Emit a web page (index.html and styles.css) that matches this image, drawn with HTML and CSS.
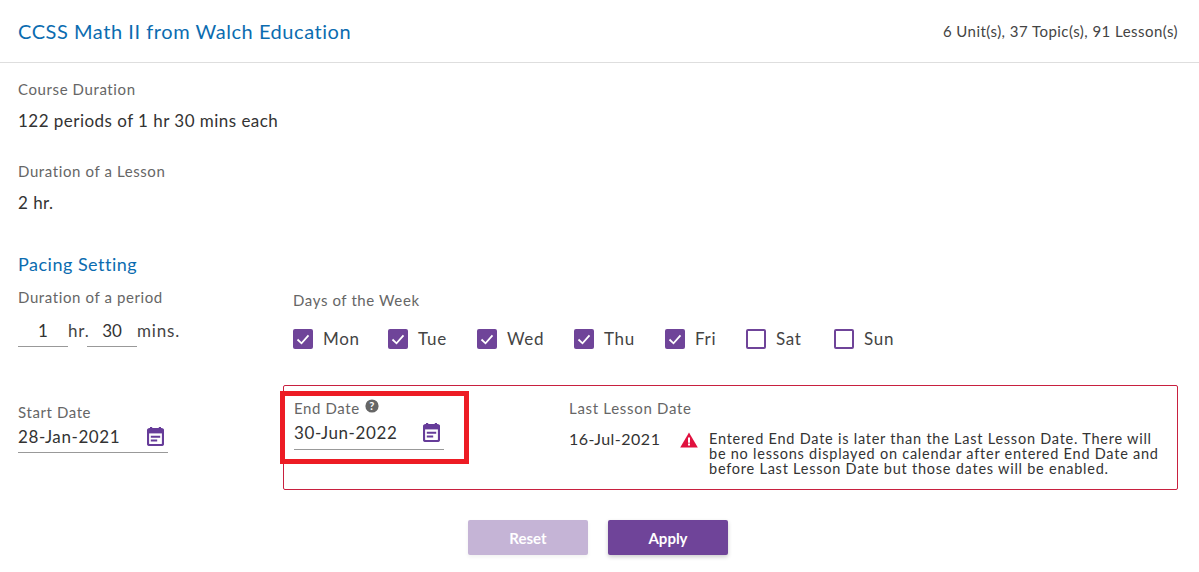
FILE: index.html
```html
<!DOCTYPE html>
<html lang="en">
<head>
<meta charset="utf-8">
<title>Pacing</title>
<link rel="stylesheet" href="styles.css">
</head>
<body>
<svg class="defs" width="0" height="0" aria-hidden="true">
  <symbol id="cal" viewBox="0 0 17 19">
    <path d="M3 0h2.2v2.5H3zM11.8 0H14v2.5h-2.2z" fill="#663c99"/>
    <rect x="1" y="2" width="15" height="16" rx="1.5" fill="none" stroke="#663c99" stroke-width="2.2"/>
    <rect x="1" y="2" width="15" height="4.4" fill="#663c99"/>
    <path d="M3.8 8.8h9.4v2H3.8zM3.8 12.4h6.4v2H3.8z" fill="#663c99"/>
  </symbol>
</svg>
<header class="top">
  <h1 class="title">CCSS Math II from Walch Education</h1>
  <div class="counts">6 Unit(s), 37 Topic(s), 91 Lesson(s)</div>
</header>
<main class="main">
  <div class="label l-course">Course Duration</div>
  <div class="value v-course">122 periods of 1 hr 30 mins each</div>
  <div class="label l-lesson">Duration of a Lesson</div>
  <div class="value v-lesson">2 hr.</div>
  <h2 class="section">Pacing Setting</h2>
  <div class="pacing">
    <div class="period">
      <div class="label">Duration of a period</div>
      <div class="period-row">
        <span class="num">1</span><span class="unit">hr.</span><span class="num">30</span><span class="unit">mins.</span>
      </div>
    </div>
    <div class="days">
      <div class="label">Days of the Week</div>
      <div class="day-row">
        <label class="day d1"><span class="box on"><svg viewBox="0 0 20 20"><path d="M4.5 10.5l4 3.8 7-8" fill="none" stroke="#fff" stroke-width="1.8"/></svg></span>Mon</label>
        <label class="day d2"><span class="box on"><svg viewBox="0 0 20 20"><path d="M4.5 10.5l4 3.8 7-8" fill="none" stroke="#fff" stroke-width="1.8"/></svg></span>Tue</label>
        <label class="day d3"><span class="box on"><svg viewBox="0 0 20 20"><path d="M4.5 10.5l4 3.8 7-8" fill="none" stroke="#fff" stroke-width="1.8"/></svg></span>Wed</label>
        <label class="day d4"><span class="box on"><svg viewBox="0 0 20 20"><path d="M4.5 10.5l4 3.8 7-8" fill="none" stroke="#fff" stroke-width="1.8"/></svg></span>Thu</label>
        <label class="day d5"><span class="box on"><svg viewBox="0 0 20 20"><path d="M4.5 10.5l4 3.8 7-8" fill="none" stroke="#fff" stroke-width="1.8"/></svg></span>Fri</label>
        <label class="day d6"><span class="box"></span>Sat</label>
        <label class="day d7"><span class="box"></span>Sun</label>
      </div>
    </div>
  </div>
  <div class="dates">
    <div class="start">
      <div class="label">Start Date</div>
      <div class="date-input"><span>28-Jan-2021</span><svg class="cal"><use href="#cal"/></svg></div>
    </div>
    <div class="range">
      <div class="end">
        <div class="label end-label">End Date
          <svg class="help" viewBox="0 0 14 14"><circle cx="7" cy="7" r="6.6" fill="#666"/><text x="7" y="10.6" text-anchor="middle" class="help-q">?</text></svg>
        </div>
        <div class="date-input"><span>30-Jun-2022</span><svg class="cal"><use href="#cal"/></svg></div>
      </div>
      <div class="last">
        <div class="label last-label">Last Lesson Date</div>
        <div class="last-row">
          <span class="last-val">16-Jul-2021</span>
          <svg class="warn" viewBox="0 0 18 16"><path d="M9 .5L17.8 15.5H.2z" fill="#e0123f"/><path d="M8 5.5h2v5.2H8zM8 11.6h2v2H8z" fill="#fff"/></svg>
          <p class="warn-text">Entered End Date is later than the Last Lesson Date. There will be no lessons displayed on calendar after entered End Date and before Last Lesson Date but those dates will be enabled.</p>
        </div>
      </div>
      <div class="highlight"></div>
    </div>
  </div>
  <div class="actions">
    <button class="btn reset">Reset</button>
    <button class="btn apply">Apply</button>
  </div>
</main>
</body>
</html>
```
FILE: styles.css
```css
* { box-sizing: border-box; }
html, body { margin: 0; padding: 0; }
body { width: 1199px; height: 572px; overflow: hidden; background: #fff; font-family: "Lato", "Open Sans", sans-serif; color: #333; position: relative; }
.defs { position: absolute; }
.top { height: 63px; border-bottom: 1px solid #dedede; display: flex; justify-content: space-between; align-items: center; padding: 0 21px 0 18px; }
.title { margin: 0; font-size: 20px; font-weight: 400; color: #0b6cb0; letter-spacing: .55px; }
.counts { font-size: 15px; color: #444; letter-spacing: .46px; }
.main { padding: 0 21px 0 18px; }
.label { font-size: 15px; line-height: 18px; color: #666; letter-spacing: .6px; }
.value { font-size: 17px; line-height: 22px; color: #333; letter-spacing: .47px; }
.l-course { margin-top: 17px; }
.v-course { margin-top: 12px; }
.l-lesson { margin-top: 30px; }
.v-lesson { margin-top: 12px; }
.section { margin: 38px 0 0; font-size: 18px; line-height: 24px; font-weight: 400; color: #0b6cb0; letter-spacing: .5px; }
.pacing { display: flex; margin-top: 12px; height: 97px; }
.period { width: 275px; }
.period-row { display: flex; align-items: flex-start; margin-top: 13px; font-size: 17px; color: #444; }
.num { width: 50px; height: 28px; line-height: 24px; border-bottom: 1px solid #999; text-align: center; color: #333; }
.unit { line-height: 24px; letter-spacing: .85px; }
.unit:nth-child(2) { width: 19px; text-align: left; }
.days { padding-top: 3px; }
.day-row { display: flex; margin-top: 20px; }
.day { display: flex; align-items: center; font-size: 17px; line-height: 20px; color: #444; letter-spacing: .7px; }
.d1 { width: 95px; } .d2 { width: 89px; } .d3 { width: 97px; } .d4 { width: 91px; } .d5 { width: 81px; } .d6 { width: 88px; }
.box { width: 20px; height: 20px; border: 2px solid #6f4499; border-radius: 2px; margin-right: 10px; display: block; flex: none; }
.box.on { background: #6f4499; border: 0; }
.box svg { display: block; width: 20px; height: 20px; }
.dates { display: flex; }
.start { width: 265px; padding-top: 18px; }
.date-input { width: 150px; border-bottom: 1px solid #999; display: flex; justify-content: space-between; align-items: center; padding: 0 4px 4px 0; font-size: 17px; color: #333; letter-spacing: .6px; }
.start .date-input { margin-top: 3px; height: 29px; }
.cal { width: 17px; height: 19px; }
.range { position: relative; width: 895px; height: 105px; border: 1px solid #c8203f; border-radius: 2px; display: flex; padding: 13px 0 0 10px; }
.end { width: 275px; }
.end-label { display: flex; align-items: center; gap: 5px; }
.help { width: 14px; height: 14px; margin-top: -4px; flex: none; }
.help-q { font-size: 11px; font-weight: 700; fill: #fff; font-family: "Lato", sans-serif; }
.end .date-input { margin-top: 3px; height: 30px; }
.last-label { letter-spacing: .7px; }
.last-row { display: flex; align-items: flex-start; margin-top: 12px; }
.last-val { font-size: 16px; line-height: 22px; color: #333; letter-spacing: .5px; width: 111px; flex: none; margin-top: -1px; }
.warn { width: 18px; height: 16px; margin-top: 3px; flex: none; }
.warn-text { margin: 2px 0 0 11px; width: 458px; font-size: 14.5px; line-height: 15px; color: #333; letter-spacing: .76px; }
.highlight { position: absolute; left: -4px; top: 5px; width: 189px; height: 73px; border: 5px solid #ed1c24; }
.actions { display: flex; justify-content: center; gap: 20px; margin-top: 30px; }
.btn { width: 120px; height: 35px; border: 0; border-radius: 2px; font: 700 15px "Lato", sans-serif; color: #fff; box-shadow: 0 2px 4px rgba(0,0,0,.2); }
.reset { background: #c5b4d6; box-shadow: 0 2px 4px rgba(0,0,0,.06); }
.apply { background: #6f4499; }
```
